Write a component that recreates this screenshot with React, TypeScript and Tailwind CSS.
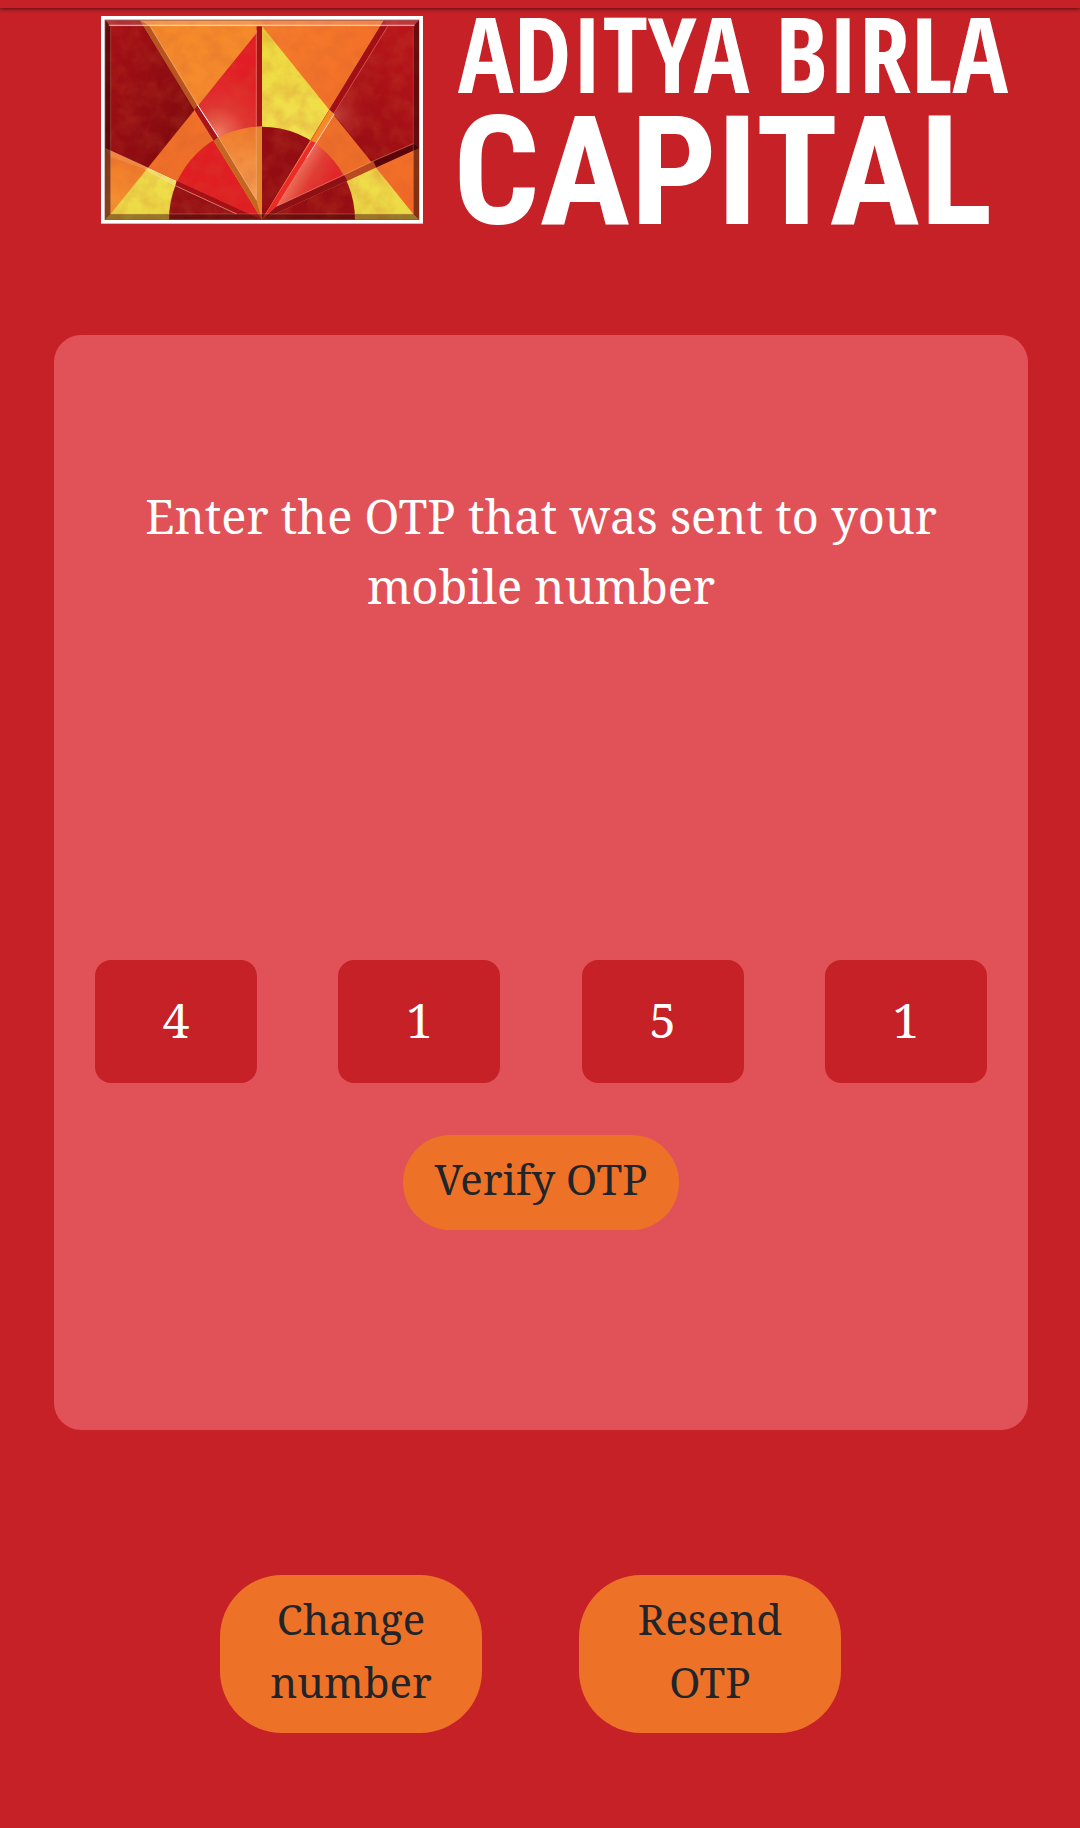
import { useRef, useState } from "react";

/* Wedges of the emblem, fanned out from the foot of its centre line.
   Each one has a colour outside the triangle, inside it, and inside the disc. */
const wedges = [
  { id: "w1", points: "516,660 46,445 46,660", outer: "url(#amber)", inner: "url(#lemon)", disc: "url(#wine)" },
  { id: "w2", points: "516,660 46,445 46,62 150,62", outer: "url(#maroon)", inner: "url(#tangerine)", disc: "#e01e23" },
  { id: "w3", points: "516,660 150,62 516,62", outer: "url(#apricot)", inner: "url(#scarlet)", disc: "url(#peach)" },
  { id: "w4", points: "516,660 516,62 882,62", outer: "url(#orange)", inner: "url(#lemon)", disc: "#930c12" },
  { id: "w5", points: "516,660 882,62 987,62 987,445", outer: "url(#garnet)", inner: "url(#tangerine)", disc: "url(#coral)" },
  { id: "w6", points: "516,660 987,445 987,660", outer: "url(#orange)", inner: "url(#lemon)", disc: "#960d13" },
];

function Emblem() {
  return (
    <g transform="scale(0.3333) translate(-33 -49)">
      <defs>
        <linearGradient id="maroon" x1="0" y1="0" x2="1" y2="0.6">
          <stop offset="0" stopColor="#a81016" />
          <stop offset="0.5" stopColor="#8a0b10" />
          <stop offset="1" stopColor="#550508" />
        </linearGradient>
        <linearGradient id="garnet" x1="0.2" y1="1" x2="0.8" y2="0">
          <stop offset="0" stopColor="#7d080d" />
          <stop offset="0.55" stopColor="#a00f15" />
          <stop offset="1" stopColor="#b8141a" />
        </linearGradient>
        <linearGradient id="apricot" x1="0" y1="0" x2="0" y2="1">
          <stop offset="0" stopColor="#f68a2a" />
          <stop offset="0.5" stopColor="#f58b2e" />
          <stop offset="1" stopColor="#ef6a26" />
        </linearGradient>
        <linearGradient id="orange" x1="0" y1="0" x2="1" y2="1">
          <stop offset="0" stopColor="#f57e2c" />
          <stop offset="1" stopColor="#f16425" />
        </linearGradient>
        <linearGradient id="amber" x1="0" y1="0" x2="0" y2="1">
          <stop offset="0" stopColor="#f0742a" />
          <stop offset="1" stopColor="#f79a2f" />
        </linearGradient>
        <linearGradient id="tangerine" x1="0" y1="0" x2="1" y2="1">
          <stop offset="0" stopColor="#f07229" />
          <stop offset="1" stopColor="#ee6e28" />
        </linearGradient>
        <linearGradient id="lemon" x1="0" y1="0" x2="0" y2="1">
          <stop offset="0" stopColor="#ecd93c" />
          <stop offset="0.6" stopColor="#f2e150" />
          <stop offset="1" stopColor="#ebd944" />
        </linearGradient>
        <linearGradient id="wine" x1="0" y1="0" x2="1" y2="1">
          <stop offset="0" stopColor="#8c0a10" />
          <stop offset="1" stopColor="#a81c20" />
        </linearGradient>
        <radialGradient id="scarlet" gradientUnits="userSpaceOnUse" cx="385" cy="405" r="190">
          <stop offset="0" stopColor="#ee7b62" />
          <stop offset="0.45" stopColor="#e03532" />
          <stop offset="1" stopColor="#e21d25" />
        </radialGradient>
        <linearGradient id="peach" x1="0.8" y1="1" x2="0.8" y2="0">
          <stop offset="0" stopColor="#f7b27c" />
          <stop offset="0.55" stopColor="#f4a25c" />
          <stop offset="1" stopColor="#f2812d" />
        </linearGradient>
        <linearGradient id="coral" gradientUnits="userSpaceOnUse" x1="600" y1="530" x2="700" y2="590">
          <stop offset="0" stopColor="#ef7a63" />
          <stop offset="0.5" stopColor="#e23a34" />
          <stop offset="1" stopColor="#e0252a" />
        </linearGradient>
        <radialGradient id="sheen" gradientUnits="userSpaceOnUse" cx="735" cy="350" r="110">
          <stop offset="0" stopColor="#f08a72" stopOpacity="0.4" />
          <stop offset="1" stopColor="#c81a20" stopOpacity="0" />
        </radialGradient>
        <filter id="mottle" x="0" y="0" width="1" height="1">
          <feTurbulence type="fractalNoise" baseFrequency="0.02" numOctaves="3" seed="7" />
          <feColorMatrix values="0 0 0 0 0.6  0 0 0 0 0.1  0 0 0 0 0.03  1.4 0 0 0 -0.5" />
        </filter>
        {wedges.map((w) => (
          <clipPath key={w.id} id={w.id}>
            <polygon points={w.points} />
          </clipPath>
        ))}
      </defs>

      <rect x="33" y="49" width="966" height="623" fill="#fff" />
      <rect x="44" y="60" width="944" height="601" fill="#8a4a44" />
      {wedges.map((w) => (
        <g key={w.id} clipPath={`url(#${w.id})`}>
          <polygon points={w.points} fill={w.outer} />
          <polygon points="516,80 62,643 46,660 987,660 970,643" fill={w.inner} />
          <circle cx="516" cy="660" r="279" fill={w.disc} />
        </g>
      ))}
      <polygon points="730,345 882,100 970,80 970,432 860,490" fill="url(#sheen)" />
      <rect x="46" y="62" width="941" height="598" filter="url(#mottle)" opacity="0.35" />

      {/* Bevels along the dividing bars */}
      <polygon points="150,62 180,80 322,315 313,330" fill="#b8551f" />
      <polygon points="313,330 322,315 385,412 372,424" fill="#a8141c" />
      <polygon points="372,424 385,412 500,602 516,660" fill="#c4661f" />
      <polygon points="500,80 516,80 516,380 500,381" fill="#a81219" />
      <polygon points="500,381 516,380 516,660 500,602" fill="#e0862b" />
      <polygon points="882,62 893,80 733,343 719,330" fill="#a30f15" />
      <polygon points="719,330 733,343 678,430 664,424" fill="#f68a26" />
      <polygon points="664,424 678,430 560,620 516,660" fill="#ee2a26" />
      <polygon points="987,445 970,432 850,484 858,503" fill="#5c0509" />
      <polygon points="858,503 850,484 763,527 772,543" fill="#b9491f" />
      <polygon points="772,543 763,527 560,620 516,660" fill="#8c1014" />
      <polygon points="46,445 62,472 165,508 180,506" fill="#fff" opacity="0.12" />
      <polygon points="180,506 165,508 260,560 260,543" fill="#fff" opacity="0.2" />
      <polygon points="260,543 516,660 440,643 256,558" fill="#a80f16" />
      <polyline points="165,508 260,560 440,643" fill="none" stroke="#fbe3b0" strokeWidth="2" opacity="0.8" />
      <polyline points="180,80 322,315 385,412 500,602" fill="none" stroke="#fbd0b0" strokeWidth="2" opacity="0.75" />
      <polyline points="322,315 385,412" fill="none" stroke="#fff" strokeWidth="3" opacity="0.9" />
      <polyline points="893,80 560,620 850,484 970,432" fill="none" stroke="#f7a18c" strokeWidth="2" opacity="0.7" />
      <line x1="733" y1="343" x2="650" y2="475" stroke="#fff" strokeWidth="3" opacity="0.6" />
      <line x1="499" y1="92" x2="499" y2="600" stroke="#f7b092" strokeWidth="2" opacity="0.7" />

      {/* Bevelled rim */}
      <polygon points="46,62 62,80 62,643 46,660" fill="#2c0405" opacity="0.55" />
      <polygon points="987,62 970,80 970,643 987,660" fill="#2c0405" opacity="0.55" />
      <polygon points="46,660 62,643 970,643 987,660" fill="#3a0a05" opacity="0.45" />
      <polygon points="46,62 987,62 970,80 62,80" fill="#fff" opacity="0.14" />
      <line x1="56" y1="77" x2="974" y2="77" stroke="#fff" strokeWidth="4" opacity="0.55" />
      <polyline points="62,80 62,643 970,643 970,80" fill="none" stroke="#f3a58c" strokeWidth="2" opacity="0.45" />
    </g>
  );
}

function Logo() {
  return (
    <svg viewBox="0 0 908 208" className="block w-full overflow-visible" role="img" aria-label="Aditya Birla Capital">
      <Emblem />
      <g className="font-bold" fill="#fff">
        <text x="357" y="77" fontSize="104" className="font-['Open_Sans_Condensed','Roboto_Condensed',sans-serif]">
          ADITYA BIRLA
        </text>
        <text x="352" y="208" fontSize="152" className="font-['Roboto_Condensed','Open_Sans_Condensed',sans-serif]">
          CAPITAL
        </text>
      </g>
    </svg>
  );
}

const buttonClass = "cursor-pointer bg-[#ed7228] pt-3 pb-5 text-[42px] leading-[63px] text-[#212529]";

export default function App() {
  const [digits, setDigits] = useState(["4", "1", "5", "1"]);
  const boxes = useRef<(HTMLInputElement | null)[]>([]);

  const change = (index: number, value: string) => {
    const digit = value.replace(/\D/g, "").slice(-1);
    setDigits((all) => all.map((d, i) => (i === index ? digit : d)));
    if (digit) boxes.current[index + 1]?.focus();
  };

  return (
    <div className="flex min-h-screen flex-col bg-[#c72128] font-['Noto_Serif',serif]">
      <div className="h-2 bg-[#c72128] shadow-[0_1px_4px_rgba(0,0,0,0.6)]" />
      <header className="pt-2 pr-[71px] pl-[101px]">
        <Logo />
      </header>

      <main className="flex flex-col">
        <form
          className="mt-[111px] mr-[52px] ml-[54px] flex flex-col items-center rounded-[27px] bg-[#e15258] px-[41px] pt-[146px] pb-[200px]"
          onSubmit={(e) => e.preventDefault()}
        >
          <h1 className="text-center text-[47px] leading-[70px] text-white">
            Enter the OTP that was sent to your mobile number
          </h1>
          <div className="mt-[339px] flex w-full justify-between gap-4">
            {digits.map((d, i) => (
              <input
                key={i}
                ref={(el) => {
                  boxes.current[i] = el;
                }}
                aria-label={`OTP digit ${i + 1}`}
                inputMode="numeric"
                value={d}
                onChange={(e) => change(i, e.target.value)}
                className="h-[123px] w-[162px] min-w-0 rounded-2xl bg-[#c72128] pb-1 text-center text-[48px] text-white outline-none"
              />
            ))}
          </div>
          <button type="submit" className={`${buttonClass} mt-[52px] rounded-full px-[31px]`}>
            Verify OTP
          </button>
        </form>

        <div className="mt-[145px] mb-24 flex justify-center gap-[97px] pr-[19px]">
          <button type="button" className={`${buttonClass} w-[262px] rounded-[62px] px-12`}>
            Change number
          </button>
          <button type="button" className={`${buttonClass} w-[262px] rounded-[62px] px-12`}>
            Resend OTP
          </button>
        </div>
      </main>
    </div>
  );
}
